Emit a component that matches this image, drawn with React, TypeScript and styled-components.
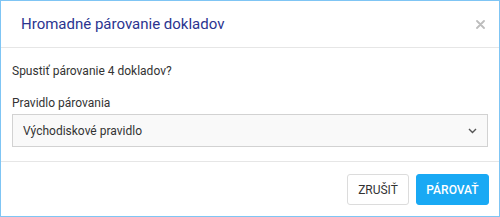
import React, { useState } from "react";
import styled, { createGlobalStyle } from "styled-components";

const GlobalStyle = createGlobalStyle`
  html, body {
    margin: 0;
    padding: 0;
    background: #ffffff;
  }
  body {
    font-family: Roboto, "Liberation Sans", Arial, sans-serif;
  }
`;

const Dialog = styled.div`
  width: 500px;
  height: 217px;
  box-sizing: border-box;
  border: 1px solid #7fc5f4;
  background: #ffffff;
  display: flex;
  flex-direction: column;
`;

const Header = styled.div`
  height: 46px;
  border-bottom: 1px solid #e6e6e6;
  display: flex;
  align-items: center;
  justify-content: space-between;
  padding: 0 11px 0 20px;
`;

const Title = styled.h2`
  margin: 0;
  font-size: 15px;
  font-weight: 400;
  color: #2b3490;
`;

const CloseButton = styled.button`
  border: none;
  background: none;
  padding: 0;
  width: 16px;
  height: 16px;
  display: flex;
  align-items: center;
  justify-content: center;
  cursor: pointer;
`;

const Body = styled.div`
  padding: 14px 11px 12px 11px;
  display: flex;
  flex-direction: column;
`;

const Question = styled.p`
  margin: 0 0 14px 0;
  font-size: 12px;
  line-height: 18px;
  color: #333333;
`;

const Label = styled.label`
  font-size: 12px;
  line-height: 18px;
  color: #333333;
  margin-bottom: 2px;
`;

const SelectWrap = styled.div`
  position: relative;
`;

const Select = styled.select`
  width: 100%;
  height: 33px;
  box-sizing: border-box;
  appearance: none;
  border: 1px solid #d2d2d2;
  border-radius: 0;
  background: #f9f9f9;
  padding: 0 30px 0 10px;
  font-family: Roboto, "Liberation Sans", Arial, sans-serif;
  font-size: 12px;
  color: #333333;
  outline: none;
`;

const Chevron = styled.svg`
  position: absolute;
  right: 11px;
  top: 14px;
  pointer-events: none;
`;

const Footer = styled.div`
  margin-top: auto;
  border-top: 1px solid #e6e6e6;
  padding: 12px 10px 11px;
  display: flex;
  justify-content: flex-end;
  gap: 7px;
`;

const Button = styled.button<{ $primary?: boolean }>`
  height: 31px;
  width: ${(p) => (p.$primary ? "73px" : "62px")};
  padding: 0;
  border-radius: 3px;
  border: 1px solid ${(p) => (p.$primary ? "#19a9f4" : "#dcdcdc")};
  background: ${(p) => (p.$primary ? "#19a9f4" : "#ffffff")};
  color: ${(p) => (p.$primary ? "#ffffff" : "#333333")};
  font-family: Roboto, "Liberation Sans", Arial, sans-serif;
  font-size: 12px;
  font-weight: ${(p) => (p.$primary ? 500 : 400)};
  cursor: pointer;
`;

export default function App() {
  const [rule, setRule] = useState("default");

  return (
    <>
      <GlobalStyle />
      <Dialog>
        <Header>
          <Title>Hromadné párovanie dokladov</Title>
          <CloseButton aria-label="Zavrieť">
            <svg width="9" height="9" viewBox="0 0 9 9">
              <path
                d="M1 1 L8 8 M8 1 L1 8"
                stroke="#bdbdbd"
                strokeWidth="1.8"
                strokeLinecap="round"
              />
            </svg>
          </CloseButton>
        </Header>
        <Body>
          <Question>Spustiť párovanie 4 dokladov?</Question>
          <Label htmlFor="rule">Pravidlo párovania</Label>
          <SelectWrap>
            <Select
              id="rule"
              value={rule}
              onChange={(e) => setRule(e.target.value)}
            >
              <option value="default">Východiskové pravidlo</option>
            </Select>
            <Chevron width="9" height="6" viewBox="0 0 9 6">
              <path
                d="M1 1 L4.5 4.5 L8 1"
                fill="none"
                stroke="#555555"
                strokeWidth="1.4"
              />
            </Chevron>
          </SelectWrap>
        </Body>
        <Footer>
          <Button>ZRUŠIŤ</Button>
          <Button $primary>PÁROVAŤ</Button>
        </Footer>
      </Dialog>
    </>
  );
}
